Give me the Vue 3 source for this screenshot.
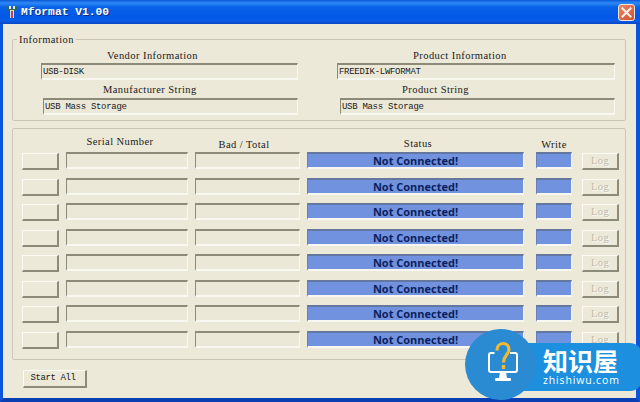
<template>
  <div class="window">
    <div class="titlebar">
      <svg class="app-icon" width="12" height="14" viewBox="0 0 12 14">
        <path d="M0 1l4 2 2 1 2-1 4-2-2 5H2z" fill="#2f6b4a" />
        <path d="M3 1h2v3H3zM7 1h2v3H7z" fill="#f4e6d8" />
        <rect x="4" y="5" width="4" height="8" fill="#e9d7cf" />
        <rect x="5" y="6" width="2" height="7" fill="#b2455d" />
      </svg>
      <span class="title">Mformat V1.00</span>
      <div class="close">
        <svg width="11" height="11" viewBox="0 0 11 11">
          <path d="M1.5 1.5l8 8M9.5 1.5l-8 8" stroke="#fff" stroke-width="2" stroke-linecap="square" opacity=".9" />
        </svg>
      </div>
    </div>

    <div class="content">
      <div class="group info">
        <span class="legend">Information</span>
        <div class="info-grid">
          <div class="info-item vendor">
            <div class="info-label">Vendor Information</div>
            <div class="field">USB-DISK</div>
          </div>
          <div class="info-item product">
            <div class="info-label">Product Information</div>
            <div class="field">FREEDIK-LWFORMAT</div>
          </div>
          <div class="info-item manufacturer">
            <div class="info-label">Manufacturer String</div>
            <div class="field">USB Mass Storage</div>
          </div>
          <div class="info-item product-string">
            <div class="info-label">Product String</div>
            <div class="field">USB Mass Storage</div>
          </div>
        </div>
      </div>

      <div class="group ports">
        <div class="port-row port-head">
          <span></span>
          <span class="h-serial">Serial Number</span>
          <span class="h-bad">Bad / Total</span>
          <span class="h-status">Status</span>
          <span class="h-write">Write</span>
          <span></span>
        </div>
        <div class="port-list">
          <div v-for="n in 8" :key="n" class="port-row">
            <div class="btn port-btn"></div>
            <div class="field"></div>
            <div class="field"></div>
            <div class="field blue status">Not Connected!</div>
            <div class="field blue"></div>
            <div class="btn port-btn log">Log</div>
          </div>
        </div>
      </div>

      <div class="btn start">Start All</div>
    </div>

    <div class="badge">
      <div class="badge-pill">
        <div class="badge-name">知识屋</div>
        <div class="badge-url">zhishiwu.com</div>
      </div>
      <div class="badge-circle">
        <svg width="36" height="44" viewBox="0 0 36 44">
          <path d="M11.500 12H8a2 2 0 0 0-2 2v15a2 2 0 0 0 2 2h24a2 2 0 0 0 2-2V14a2 2 0 0 0-2-2h-5" fill="none" stroke="#fff" stroke-width="2" />
          <path d="M17 31h6l1 6h-8z" fill="#fff" />
          <rect x="12" y="37" width="16" height="3" rx="1" fill="#fff" />
          <path d="M14 9.500c0-4 2.500-7 6-7s6 2.500 6 6c0 5-5.500 6-5.500 13" fill="none" stroke="#f5b92e" stroke-width="3.200" />
          <rect x="18.800" y="24" width="3.400" height="4" fill="#f5b92e" />
        </svg>
      </div>
    </div>
  </div>
</template>

<script setup>
</script>

<style scoped>
.window {
  position: relative;
  width: 640px;
  height: 402px;
  box-sizing: border-box;
  display: flex;
  flex-direction: column;
  background: #ece9d8;
  border-left: 3px solid #0a55dc;
  border-right: 4px solid #0a55dc;
  border-bottom: 4px solid #0a3fb4;
  font-family: "Liberation Serif", serif;
  font-size: 10.5px;
  letter-spacing: .43px;
  color: #1a1a1a;
}

.titlebar {
  flex: none;
  height: 24px;
  margin: 0 -4px 0 -3px;
  padding: 0 5px 0 6px;
  display: flex;
  align-items: center;
  background: linear-gradient(to bottom, #0a58d8 0, #2f8af5 3px, #0a62e8 7px, #0058e6 16px, #0a5ce8 21px, #0a45c0 24px);
}

.app-icon {
  flex: none;
}

.title {
  margin-left: 3px;
  font-family: "Liberation Mono", monospace;
  font-size: 11.3px;
  letter-spacing: 0;
  font-weight: bold;
  color: #fff;
  text-shadow: 1px 1px 0 #0a2d80;
}

.close {
  margin-left: auto;
  width: 17px;
  height: 17px;
  box-sizing: border-box;
  display: flex;
  align-items: center;
  justify-content: center;
  border: 1px solid #f0e4e0;
  border-radius: 3px;
  background: linear-gradient(135deg, #e98a66, #d2502c);
}

.content {
  flex: 1;
  display: flex;
  flex-direction: column;
  padding: 15px 10px 0 9px;
}

.group {
  position: relative;
  border: 1px solid #c9c7b6;
  border-radius: 2px;
}

.info {
  height: 82px;
  box-sizing: border-box;
}

.legend {
  position: absolute;
  top: -6px;
  left: 4px;
  padding: 0 2px;
  background: #ece9d8;
  line-height: 11px;
}

.info-grid {
  display: grid;
  grid-template-columns: 274px 278px;
  column-gap: 39px;
  row-gap: 4px;
  padding: 10px 0 0 11px;
}

.info-item {
  display: flex;
  flex-direction: column;
  gap: 2px;
}

.info-label {
  line-height: 11px;
  white-space: nowrap;
}

.info-item .field {
  height: 17px;
  line-height: 14px;
  padding-left: 1px;
  font-family: "Liberation Mono", monospace;
  font-size: 9px;
  letter-spacing: -.3px;
}

.manufacturer,
.product-string {
  gap: 3px;
}

.vendor {
  padding-left: 17px;
}
.vendor .info-label {
  padding-left: 66px;
}
.manufacturer {
  padding-left: 19px;
}
.manufacturer .info-label {
  padding-left: 60px;
}
.product .info-label {
  padding-left: 76px;
}
.product-string {
  padding-left: 3px;
}
.product-string .info-label {
  padding-left: 62px;
}

.field {
  box-sizing: border-box;
  height: 17px;
  border-top: 2px solid #8c8a78;
  border-left: 1px solid #8c8a78;
  border-right: 1px solid #f8f7f0;
  border-bottom: 2px solid #f8f7f0;
  background: #ebe8d8;
  white-space: nowrap;
  overflow: hidden;
}

.ports {
  margin-top: 7px;
  height: 232px;
  box-sizing: border-box;
}

.port-row {
  display: grid;
  grid-template-columns: 37px 122px 105px 217px 36px 37px;
  column-gap: 7px;
  padding-left: 9px;
}

.port-row > :nth-child(5) {
  margin-left: 5px;
  margin-right: -5px;
}

.port-row > :nth-child(6) {
  margin-left: 8px;
  margin-right: -8px;
}

.port-head {
  height: 23px;
  align-items: center;
  text-align: center;
  line-height: 11px;
}

.h-serial {
  padding: 2px 14px 0 0;
}
.h-bad {
  padding: 7px 7px 0 0;
}
.h-status {
  padding: 5px 0 0 5px;
}
.h-write {
  padding-top: 7px;
}

.port-list {
  display: grid;
  grid-auto-rows: 18px;
  row-gap: 7.57px;
}

.blue {
  background: #7092df;
  border-top-color: #64779f;
  border-left-color: #6a7fb4;
  border-right-color: #f4f3ea;
}

.status {
  font-family: "Open Sans", sans-serif;
  font-size: 11px;
  font-weight: 700;
  letter-spacing: 0;
  line-height: 14px;
  color: #0c1f5e;
  text-align: center;
}

.btn {
  box-sizing: border-box;
  border-top: 1px solid #fbfaf4;
  border-left: 1px solid #fbfaf4;
  border-right: 2px solid #8c8a78;
  border-bottom: 2px solid #8c8a78;
  background: #ece9d8;
  text-align: center;
}

.port-btn {
  height: 17px;
  margin-top: 1px;
}

.log {
  color: #bdbbac;
  text-shadow: 1px 1px 0 #fbfaf4;
  line-height: 14px;
}

.start {
  align-self: flex-start;
  margin: 10px 0 0 11px;
  width: 64px;
  height: 18px;
  line-height: 15px;
  padding-right: 3px;
  font-family: "Liberation Mono", monospace;
  font-size: 9px;
  letter-spacing: -.4px;
}

.badge {
  position: absolute;
  left: 462px;
  top: 329px;
  width: 177px;
  height: 71px;
}

.badge-pill {
  position: absolute;
  left: 32px;
  top: 14px;
  width: 145px;
  height: 48px;
  box-sizing: border-box;
  padding: 3px 0 0 46px;
  border-radius: 0 12px 12px 0;
  background: #1d8fdf;
  color: #fff;
  letter-spacing: 0;
}

.badge-name {
  font-family: "Noto Sans CJK SC", sans-serif;
  font-size: 25px;
  font-weight: 700;
  line-height: 28px;
}

.badge-url {
  font-family: "Open Sans", sans-serif;
  font-size: 10.500px;
  line-height: 12px;
  letter-spacing: .85px;
}

.badge-circle {
  position: absolute;
  left: 0;
  top: 0;
  width: 71px;
  height: 71px;
  display: flex;
  align-items: flex-start;
  justify-content: center;
  padding-top: 12px;
  box-sizing: border-box;
  border-radius: 50%;
  background: #2a8bd2;
}
</style>
